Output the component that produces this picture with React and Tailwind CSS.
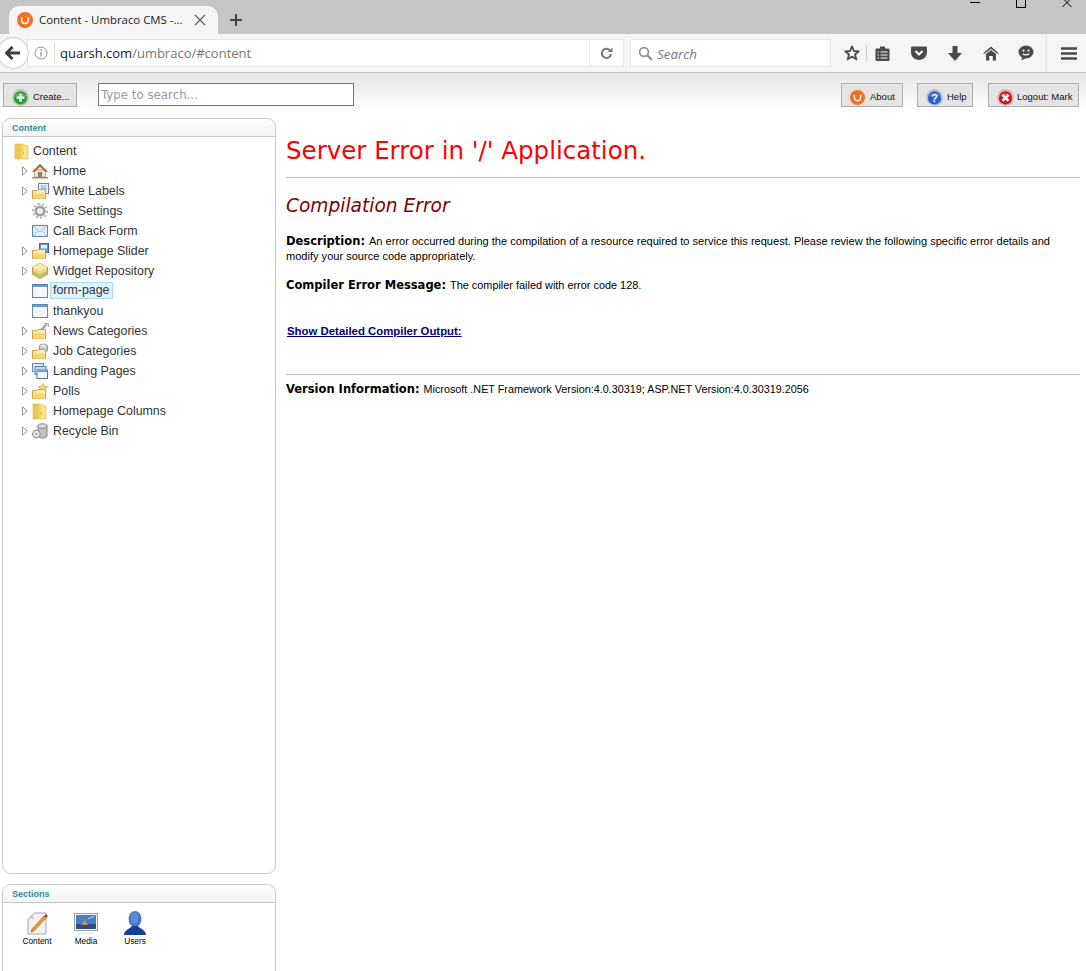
import React from 'react'

const sans = "font-['Liberation_Sans',Arial,sans-serif]"
const verdana = "font-['DejaVu_Sans',Verdana,sans-serif]"

function UmbracoLogo({ size = 16 }) {
  return (
    <svg width={size} height={size} viewBox="0 0 16 16">
      <circle cx="8" cy="8" r="8" fill="#f37021" />
      <path d="M4.6 5.2 C4.4 9 5 11.6 8 11.6 C11 11.6 11.6 9 11.4 5.2" fill="none" stroke="#fff" strokeWidth="1.5" />
    </svg>
  )
}

function GlobeBall({ color, edge, children }) {
  return (
    <svg width="17" height="17" viewBox="0 0 16 16">
      <circle cx="8" cy="8" r="8" fill={edge} />
      <circle cx="8" cy="8.4" r="6.2" fill={color} />
      <path d="M3 7 C4.6 3 11.4 3 13 7 C10 5.6 6 5.6 3 7Z" fill="#fff" opacity="0.3" />
      {children}
    </svg>
  )
}

function TreeArrow() {
  return (
    <svg width="6" height="10" viewBox="0 0 6 10" className="shrink-0">
      <path d="M0.5 0.8 L5.3 5 L0.5 9.2Z" fill="#fff" stroke="#9a9a9a" strokeWidth="1" />
    </svg>
  )
}

function FolderBase() {
  return (
    <>
      <path d="M0.5 7.5 H5 L6 6.5 H13.5 V16 H0.5Z" fill="#fdeeb4" stroke="#dc9a3c" strokeWidth="1" />
      <path d="M1.5 10.5 H12.5 V15 H1.5Z" fill="#f9d668" />
    </>
  )
}

function TreeIcon({ type }) {
  if (type === 'bigfolder') {
    return (
      <svg width="16" height="17" viewBox="0 0 16 17">
        <path d="M1 1 H8 V16 L1 16Z" fill="#edc84f" stroke="#d9b64e" strokeWidth="0.6" />
        <path d="M8 1 L14 3 V16 H8Z" fill="#f9e48e" stroke="#d9b64e" strokeWidth="0.6" />
        <path d="M6.5 1 H9 V16 H6.5Z" fill="#f4d45e" />
        <path d="M9.4 9 H10 V11 H9.4Z" fill="#8aa5c8" />
      </svg>
    )
  }
  if (type === 'home') {
    return (
      <svg width="16" height="16" viewBox="0 0 16 16">
        <path d="M2.5 7 H13.5 V14 H2.5Z" fill="#f4ead8" stroke="#b09268" strokeWidth="0.8" />
        <path d="M8 1 L0.5 8.5 H3 L8 3.8 L13 8.5 H15.5Z" fill="#b5763a" stroke="#8c5a2c" strokeWidth="0.5" />
        <rect x="6" y="9" width="4" height="5" fill="#808080" />
        <path d="M0 14 H16 V15.5 H0Z" fill="#74a854" />
      </svg>
    )
  }
  if (type === 'labels') {
    return (
      <svg width="17" height="16" viewBox="0 0 17 16">
        <rect x="6.5" y="0.5" width="10" height="10" fill="#eef4fb" stroke="#5f87bd" />
        <path d="M8.5 3 H14.5 M8.5 5 H14.5 M8.5 7 H14.5" stroke="#7ea0cc" strokeWidth="1" />
        <FolderBase />
      </svg>
    )
  }
  if (type === 'settings') {
    return (
      <svg width="16" height="16" viewBox="0 0 16 16">
        <circle cx="8" cy="8" r="7" fill="none" stroke="#bababa" strokeWidth="2" strokeDasharray="2.4 1.9" />
        <circle cx="8" cy="8" r="4.2" fill="none" stroke="#a2a2a2" strokeWidth="2.8" />
        <circle cx="8" cy="8" r="1.8" fill="#e8e8e8" />
      </svg>
    )
  }
  if (type === 'mail') {
    return (
      <svg width="16" height="16" viewBox="0 0 16 16">
        <rect x="0.5" y="2.5" width="15" height="11" fill="#e3eefa" stroke="#5f87bd" />
        <path d="M0.5 2.5 L8 9 L15.5 2.5 M0.5 13.5 L6 7.5 M15.5 13.5 L10 7.5" fill="none" stroke="#9cbbe0" />
      </svg>
    )
  }
  if (type === 'slider') {
    return (
      <svg width="17" height="16" viewBox="0 0 17 16">
        <rect x="7.5" y="0.5" width="9" height="9" fill="#6c93c8" stroke="#3f68a3" />
        <rect x="9" y="2" width="6" height="3.5" fill="#e6eef8" />
        <FolderBase />
      </svg>
    )
  }
  if (type === 'box') {
    return (
      <svg width="16" height="16" viewBox="0 0 16 16">
        <path d="M8 0.5 L15.5 4 V11.5 L8 15.5 L0.5 11.5 V4Z" fill="#f2d27a" stroke="#c99c44" />
        <path d="M0.5 4 L8 8 L15.5 4 L8 0.5Z" fill="#fbeab2" />
        <path d="M1 8 L8 12 L15 8 V10.5 L8 14.5 L1 10.5Z" fill="#a9bf62" />
      </svg>
    )
  }
  if (type === 'page') {
    return (
      <svg width="16" height="14" viewBox="0 0 16 14">
        <rect x="0.5" y="0.5" width="15" height="13" fill="#f4f7fc" stroke="#5f87bd" />
        <rect x="1" y="1" width="14" height="2" fill="#6f98cf" />
      </svg>
    )
  }
  if (type === 'news') {
    return (
      <svg width="17" height="16" viewBox="0 0 17 16">
        <path d="M7 9 L14 2" stroke="#8f9fb5" strokeWidth="2.4" />
        <path d="M12.5 1 A2.6 2.6 0 0 1 16.5 4" fill="none" stroke="#a8a8a8" strokeWidth="1.6" />
        <FolderBase />
      </svg>
    )
  }
  if (type === 'jobs') {
    return (
      <svg width="17" height="16" viewBox="0 0 17 16">
        <path d="M7.5 3 C7.5 0.5 15.5 0.5 15.5 3 V8 H7.5Z" fill="#c8c8c8" stroke="#9a9a9a" />
        <ellipse cx="11.5" cy="3" rx="3" ry="1.4" fill="#e4e4e4" />
        <FolderBase />
      </svg>
    )
  }
  if (type === 'landing') {
    return (
      <svg width="16" height="16" viewBox="0 0 16 16">
        <rect x="0.5" y="0.5" width="11" height="8" fill="#dbe7f6" stroke="#5f87bd" />
        <rect x="3" y="3.5" width="11" height="8" fill="#c6d9f0" stroke="#5f87bd" />
        <rect x="5" y="7" width="10.5" height="8.5" fill="#f4f7fc" stroke="#4e78b3" />
        <rect x="5.5" y="7.5" width="9.5" height="1.6" fill="#6f98cf" />
      </svg>
    )
  }
  if (type === 'polls') {
    return (
      <svg width="17" height="16" viewBox="0 0 17 16">
        <path d="M11 0.5 L12.5 3.4 L15.8 3.8 L13.4 6 L14 9 L11 7.6 L8 9 L8.6 6 L6.2 3.8 L9.5 3.4Z" fill="#f6d56c" stroke="#d9a63c" strokeWidth="0.7" />
        <FolderBase />
      </svg>
    )
  }
  if (type === 'bin') {
    return (
      <svg width="16" height="16" viewBox="0 0 16 16">
        <path d="M6 3 V13 C6 15.6 15 15.6 15 13 V3" fill="#c2c2c2" stroke="#858585" />
        <ellipse cx="10.5" cy="3" rx="4.5" ry="2.2" fill="#dcdcdc" stroke="#858585" />
        <circle cx="4.4" cy="11" r="3.8" fill="#ededed" stroke="#858585" />
        <circle cx="4.4" cy="11" r="1.4" fill="#b5b5b5" />
      </svg>
    )
  }
  return null
}

const treeItems = [
  { label: 'Home', icon: 'home', arrow: true },
  { label: 'White Labels', icon: 'labels', arrow: true },
  { label: 'Site Settings', icon: 'settings' },
  { label: 'Call Back Form', icon: 'mail' },
  { label: 'Homepage Slider', icon: 'slider', arrow: true },
  { label: 'Widget Repository', icon: 'box', arrow: true },
  { label: 'form-page', icon: 'page', selected: true },
  { label: 'thankyou', icon: 'page' },
  { label: 'News Categories', icon: 'news', arrow: true },
  { label: 'Job Categories', icon: 'jobs', arrow: true },
  { label: 'Landing Pages', icon: 'landing', arrow: true },
  { label: 'Polls', icon: 'polls', arrow: true },
  { label: 'Homepage Columns', icon: 'bigfolder', arrow: true },
  { label: 'Recycle Bin', icon: 'bin', arrow: true },
]

function PanelHeader({ title }) {
  return (
    <div className="h-[18px] shrink-0 rounded-t-[9px] border-b border-[#c8c8c8] bg-gradient-to-b from-white to-[#f3f3f3] pl-[9px] text-[9px] leading-[18px] font-bold text-[#2a8c96]">
      {title}
    </div>
  )
}

function ToolButton({ icon, label, className }) {
  return (
    <button className={`flex h-6 items-center border border-[#adadad] bg-[#e4e4e4] pt-[5px] text-[9.5px] text-[#111] ${className}`}>
      {icon}
      <span>{label}</span>
    </button>
  )
}

function BrowserChrome() {
  return (
    <div className={`${sans} shrink-0`}>
      <div className="flex h-[34px] items-end bg-[#c5c5c5] pl-[9px]">
        <div className="flex h-[28px] w-[209px] items-center rounded-t-[10px] bg-[#f5f5f5] pl-[8px] text-[#1a1a1a]">
          <UmbracoLogo />
          <span className="ml-[6px] font-['Open_Sans',sans-serif] text-[11.4px]">Content - Umbraco CMS -...</span>
          <svg width="12" height="12" viewBox="0 0 12 12" className="ml-[12px]">
            <path d="M1 1 L11 11 M11 1 L1 11" stroke="#555" strokeWidth="1.1" />
          </svg>
        </div>
        <svg width="14" height="14" viewBox="0 0 14 14" className="mb-[7px] ml-[11px]">
          <path d="M7 1 V13 M1 7 H13" stroke="#444" strokeWidth="2" />
        </svg>
        <div className="mb-auto ml-auto flex h-[10px] items-start">
          <div className="mt-[2px] h-px w-[10px] bg-black" />
          <div className="-mt-[4px] ml-[36px] h-[12px] w-[10px] border border-black" />
          <svg width="10" height="10" viewBox="0 0 10 10" className="-mt-[1px] mr-[14px] ml-[36px]">
            <path d="M0.5 -1 L9.5 8 M9.5 -1 L0.5 8" stroke="#000" strokeWidth="1" />
          </svg>
        </div>
      </div>
      <div className="flex h-[38px] items-center bg-[#f5f5f5]">
        <div className="z-10 -ml-[3px] flex h-[32px] w-[32px] shrink-0 items-center justify-center rounded-full border border-[#c9c9c9] bg-white">
          <svg width="16" height="14" viewBox="0 0 16 14">
            <path d="M7.5 1 L1.5 7 L7.5 13 M2 7 H15" fill="none" stroke="#3e3e3e" strokeWidth="3" />
          </svg>
        </div>
        <div className="-ml-[2px] flex h-[28px] w-[597px] shrink-0 items-center border border-[#e6e6e6] bg-white">
          <svg width="14" height="14" viewBox="0 0 14 14" className="ml-[6px]">
            <circle cx="7" cy="7" r="6" fill="none" stroke="#909090" />
            <path d="M7 6 V10.5 M7 3.4 V5" stroke="#909090" strokeWidth="1.3" />
          </svg>
          <div className="ml-[6px] h-[22px] w-px bg-[#d8d8d8]" />
          <span className="ml-[5px] flex-1 pt-[2px] font-['Open_Sans',sans-serif] text-[13px] text-[#1a1a1a]">
            quarsh.com<span className="text-[#777]">/umbraco/#content</span>
          </span>
          <div className="flex h-full w-[34px] items-center justify-center border-l border-[#e6e6e6]">
            <svg width="13" height="13" viewBox="0 0 13 13">
              <path d="M11 7 A4.6 4.6 0 1 1 9.6 3" fill="none" stroke="#777" strokeWidth="2" />
              <path d="M7.5 5 H12.5 V0.5Z" fill="#777" />
            </svg>
          </div>
        </div>
        <div className="ml-[6px] flex h-[28px] w-[201px] shrink-0 items-center border border-[#e6e6e6] bg-white pl-[7px]">
          <svg width="15" height="15" viewBox="0 0 15 15">
            <circle cx="6" cy="6" r="4.4" fill="none" stroke="#8f8f8f" strokeWidth="1.6" />
            <path d="M9.4 9.4 L14 14" stroke="#8f8f8f" strokeWidth="2.2" />
          </svg>
          <span className="ml-[4px] pt-[2px] font-['Open_Sans',sans-serif] text-[13.4px] text-[#777] italic">Search</span>
        </div>
        <div className="ml-[13px] flex items-center">
          <svg width="16" height="16" viewBox="0 0 16 16">
            <path d="M8 1.4 L9.9 6 L14.8 6.3 L11 9.5 L12.3 14.3 L8 11.6 L3.7 14.3 L5 9.5 L1.2 6.3 L6.1 6Z" fill="none" stroke="#4a4a4a" strokeWidth="1.8" strokeLinejoin="round" />
          </svg>
          <div className="ml-[6px] h-[16px] w-px bg-[#cfcfcf]" />
          <svg width="15" height="15" viewBox="0 0 15 15" className="ml-[8px]">
            <path d="M1.5 2.5 H5 V0.5 H10 V2.5 H13.5 Q14.5 2.5 14.5 3.5 V14 Q14.5 15 13.5 15 H1.5 Q0.5 15 0.5 14 V3.5 Q0.5 2.5 1.5 2.5Z" fill="#4a4a4a" />
            <path d="M5.5 6 H12.5 M5.5 9 H12.5 M5.5 12 H12.5 M2.5 6 H4 M2.5 9 H4 M2.5 12 H4" stroke="#f5f5f5" strokeWidth="1.2" />
          </svg>
          <svg width="16" height="14" viewBox="0 0 16 14" className="ml-[21px]">
            <path d="M1 0.5 H15 Q16 0.5 16 2 V6 C16 11 12 14 8 14 C4 14 0 11 0 6 V2 Q0 0.5 1 0.5Z" fill="#4a4a4a" />
            <path d="M4.5 5 L8 8.5 L11.5 5" fill="none" stroke="#f5f5f5" strokeWidth="2.2" />
          </svg>
          <svg width="14" height="15" viewBox="0 0 14 15" className="ml-[21px]">
            <path d="M4.5 0 H9.5 V7 H14 L7 15 L0 7 H4.5Z" fill="#4a4a4a" />
          </svg>
          <svg width="16" height="15" viewBox="0 0 16 15" className="ml-[21px]">
            <path d="M8 0.5 L16 7.5 H14 L8 2.7 L2 7.5 H0Z" fill="#4a4a4a" />
            <path d="M3 8 L8 4 L13 8 V14.5 H9.8 V10 H6.2 V14.5 H3Z" fill="#4a4a4a" />
          </svg>
          <svg width="16" height="16" viewBox="0 0 16 16" className="ml-[19px]">
            <ellipse cx="8" cy="7" rx="7.5" ry="6.5" fill="#4a4a4a" />
            <path d="M4 12 L3.5 15.5 L8 13Z" fill="#4a4a4a" />
            <circle cx="5.5" cy="5.6" r="1.1" fill="#f5f5f5" />
            <circle cx="10.5" cy="5.6" r="1.1" fill="#f5f5f5" />
            <path d="M4.8 8.6 C6 10.4 10 10.4 11.2 8.6" fill="none" stroke="#f5f5f5" strokeWidth="1.2" />
          </svg>
          <div className="ml-[12px] h-[38px] w-px bg-[#e4e4e4]" />
          <svg width="16" height="13" viewBox="0 0 16 13" className="ml-[14px]">
            <path d="M0 1.5 H16 M0 6.5 H16 M0 11.5 H16" stroke="#4a4a4a" strokeWidth="2.6" />
          </svg>
        </div>
      </div>
      <div className="h-px bg-[#c4c4c4]" />
    </div>
  )
}

function SectionItem({ label, children, className }) {
  return (
    <div className={`flex w-[50px] flex-col items-center ${className}`}>
      <div className="flex h-[24px] items-end">{children}</div>
      <span className="mt-[1px] text-[8.3px] leading-[11px] text-black">{label}</span>
    </div>
  )
}

export default function App() {
  return (
    <div className={`${sans} flex h-[971px] flex-col overflow-hidden bg-white`}>
      <BrowserChrome />

      <div className="flex h-[38px] shrink-0 items-start bg-gradient-to-b from-[#e6e6e6] to-white pt-[10px] pl-[3px]">
        <ToolButton
          label="Create..."
          className="w-[74px] gap-[4px] pl-[8px]"
          icon={
            <GlobeBall color="#2f9e35" edge="#b5c9b6">
              <path d="M8 4.5 V12 M4.3 8.2 H11.7" stroke="#d6ecd6" strokeWidth="2.6" />
            </GlobeBall>
          }
        />
        <div className="ml-[21px] flex h-[23px] w-[256px] items-center border border-[#767676] bg-white pt-[3px] pl-[2px] font-['DejaVu_Sans',sans-serif] text-[11.8px] text-[#9a9a9a]">
          Type to search...
        </div>
        <ToolButton
          label="About"
          className="ml-auto w-[62px] gap-[5px] pl-[8px]"
          icon={<UmbracoLogo size={15} />}
        />
        <ToolButton
          label="Help"
          className="ml-[14px] w-[56px] gap-[4px] pl-[8px]"
          icon={
            <GlobeBall color="#2a62c4" edge="#b3c3de">
              <text x="8" y="12" textAnchor="middle" fontSize="10" fontWeight="700" fill="#fff" fontFamily="Liberation Sans">?</text>
            </GlobeBall>
          }
        />
        <ToolButton
          label="Logout: Mark"
          className="mr-[7px] ml-[15px] w-[91px] gap-[3px] pl-[8px]"
          icon={
            <GlobeBall color="#d8101c" edge="#d5b5b8">
              <path d="M5.2 5.6 L10.8 11.2 M10.8 5.6 L5.2 11.2" stroke="#fff" strokeWidth="2.4" />
            </GlobeBall>
          }
        />
      </div>

      <div className="flex min-h-0 flex-1 pt-[7px]">
        <aside className="ml-[2px] flex w-[274px] shrink-0 flex-col">
          <div className="flex h-[756px] flex-col rounded-[9px] border border-[#c8c8c8]">
            <PanelHeader title="Content" />
            <div className="pt-[4px] text-[12.4px] leading-[20px] text-[#333]">
              <div className="flex h-[20px] items-center pl-[11px]">
                <TreeIcon type="bigfolder" />
                <span className="ml-[3px]">Content</span>
              </div>
              {treeItems.map((item) => (
                <div key={item.label} className="flex h-[20px] items-center pl-[19px]">
                  <div className="w-[10px]">{item.arrow && <TreeArrow />}</div>
                  <div className="flex w-[21px] items-center">
                    <TreeIcon type={item.icon} />
                  </div>
                  <span className={item.selected ? '-mt-[2px] -ml-[3px] border border-[#a6defa] bg-[#def3fd] pr-[3px] pl-[2px] leading-[15px]' : ''}>
                    {item.label}
                  </span>
                </div>
              ))}
            </div>
          </div>

          <div className="mt-[10px] flex-1 rounded-t-[9px] border border-b-0 border-[#c8c8c8]">
            <PanelHeader title="Sections" />
            <div className="flex pt-[8px] pl-[9px]">
              <SectionItem label="Content">
                <svg width="24" height="24" viewBox="0 0 24 24">
                  <path d="M9 2 H21 V23 H3 V8Z" fill="#f2f2f2" stroke="#a5a5a5" />
                  <path d="M3 8 H9 V2Z" fill="#d6d6d6" />
                  <path d="M7 18 L19 5 L21 7 L9 20 L6 21Z" fill="#e89a3c" stroke="#b9691f" strokeWidth="0.7" />
                  <path d="M19 5 L21 3 L23 5 L21 7Z" fill="#c2384a" />
                </svg>
              </SectionItem>
              <SectionItem label="Media" className="-ml-[1px]">
                <svg width="24" height="22" viewBox="0 0 24 22">
                  <rect x="0.5" y="0.5" width="23" height="17" fill="#f0f0f0" stroke="#a0a0a0" />
                  <rect x="2" y="2" width="20" height="14" fill="#4a7fc0" />
                  <path d="M2 11 H22 V16 H2Z" fill="#2d4e80" />
                  <path d="M7 12 L10.5 7 L14 12Z" fill="#c89060" />
                  <path d="M14 6 L20 3" stroke="#bcd4ee" />
                  <path d="M4 20.5 H20" stroke="#e4e4e4" />
                </svg>
              </SectionItem>
              <SectionItem label="Users" className="-ml-[1px]">
                <svg width="22" height="24" viewBox="0 0 22 24">
                  <ellipse cx="11" cy="8" rx="6.4" ry="8" fill="#4077cc" />
                  <path d="M0 24 C0 19 6 18 8 15 H14 C16 18 22 19 22 24Z" fill="#143f92" />
                  <ellipse cx="10.4" cy="7" rx="4" ry="5.5" fill="#5f8dd4" />
                </svg>
              </SectionItem>
            </div>
          </div>
        </aside>

        <main className="min-w-0 flex-1 pt-[18px] pr-[6px] pl-[10px] text-[10.9px] text-black">
          <h1 className={`${verdana} text-[24.5px] leading-[30px] font-normal text-[#ff0000]`}>
            Server Error in '/' Application.
          </h1>
          <hr className="mt-[11px] border-[#c0c0c0]" />
          <h2 className={`${verdana} mt-[16px] text-[18.6px] leading-[24px] font-normal text-[#800000] italic`}>
            Compilation Error
          </h2>
          <p className="mt-[16px] text-[11.05px] leading-[15px]">
            <b className={`${verdana} text-[11.5px]`}>Description: </b>
            An error occurred during the compilation of a resource required to service this request. Please review the following specific error details and modify your source code appropriately.
          </p>
          <p className="mt-[14px] leading-[15px]">
            <b className={`${verdana} text-[11.5px]`}>Compiler Error Message: </b>
            The compiler failed with error code 128.
          </p>
          <p className="mt-[31px] pl-px text-[11.4px] leading-[15px]">
            <a className="font-bold text-[#000080] underline">Show Detailed Compiler Output:</a>
          </p>
          <hr className="mt-[35px] border-[#c0c0c0]" />
          <p className="mt-[7px] text-[10.8px] leading-[15px]">
            <b className={`${verdana} text-[11.5px]`}>Version Information: </b>
            Microsoft .NET Framework Version:4.0.30319; ASP.NET Version:4.0.30319.2056
          </p>
        </main>
      </div>
    </div>
  )
}
